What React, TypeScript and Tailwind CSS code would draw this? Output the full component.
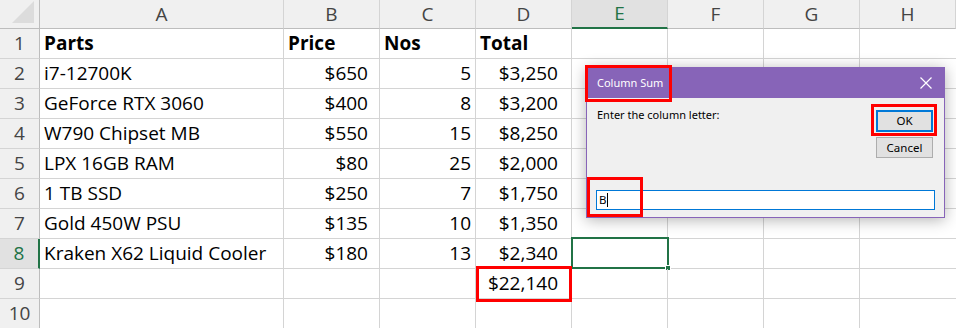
import React from "react";

const cols = ["A", "B", "C", "D", "E", "F", "G", "H"];

type Row = { a: string; b: string; c: string; d: string; bold?: boolean };
const rows: Row[] = [
  { a: "Parts", b: "Price", c: "Nos", d: "Total", bold: true },
  { a: "i7-12700K", b: "$650", c: "5", d: "$3,250" },
  { a: "GeForce RTX 3060", b: "$400", c: "8", d: "$3,200" },
  { a: "W790 Chipset MB", b: "$550", c: "15", d: "$8,250" },
  { a: "LPX 16GB RAM", b: "$80", c: "25", d: "$2,000" },
  { a: "1 TB SSD", b: "$250", c: "7", d: "$1,750" },
  { a: "Gold 450W PSU", b: "$135", c: "10", d: "$1,350" },
  { a: "Kraken X62 Liquid Cooler", b: "$180", c: "13", d: "$2,340" },
  { a: "", b: "", c: "", d: "$22,140" },
  { a: "", b: "", c: "", d: "" },
];

const cellFont = { fontFamily: "'Open Sans', 'Liberation Sans', sans-serif" };
const uiFont = { fontFamily: "'Noto Sans', 'Liberation Sans', sans-serif" };

export default function App() {
  return (
    <div className="relative w-[956px] h-[328px] overflow-hidden bg-white" style={cellFont}>
      <div className="grid grid-cols-[40px_244px_96px_96px_96px_96px_96px_96px_96px] text-[19px] text-black">
        {/* header row */}
        <div className="h-[29px] bg-[#f0f0f0] border-r border-b border-[#bdbdbd] relative">
          <div className="absolute right-[5px] bottom-[5px] w-0 h-0 border-l-[22px] border-l-transparent border-b-[22px] border-b-[#dcdcdc]" />
        </div>
        {cols.map((c) => {
          const sel = c === "E";
          return (
            <div
              key={c}
              className={
                sel
                  ? "h-[29px] bg-[#e1e1e1] border-r border-[#d4d4d4] border-b-2 border-b-[#217346] flex items-center justify-center text-[#217346]"
                  : "h-[29px] bg-[#f0f0f0] border-r border-b border-[#d4d4d4] border-b-[#bdbdbd] flex items-center justify-center text-[#444]"
              }
            >
              {c}
            </div>
          );
        })}
        {rows.map((r, i) => {
          const n = i + 1;
          const selRow = n === 8;
          const fw = r.bold ? "font-bold" : "";
          return (
            <React.Fragment key={n}>
              <div
                className={
                  selRow
                    ? "h-[30px] bg-[#e1e1e1] border-b border-[#d4d4d4] border-r-2 border-r-[#217346] flex items-center justify-center text-[#217346]"
                    : "h-[30px] bg-[#f0f0f0] border-b border-[#d4d4d4] border-r border-r-[#bdbdbd] flex items-center justify-center text-[#444]"
                }
              >
                {n}
              </div>
              <div className={`h-[30px] border-r border-b border-[#d4d4d4] flex items-center pl-[4px] whitespace-nowrap ${fw}`}>
                {r.a}
              </div>
              <div
                className={`h-[30px] border-r border-b border-[#d4d4d4] flex items-center whitespace-nowrap ${fw} ${
                  r.bold ? "pl-[4px]" : "justify-end pr-[11px]"
                }`}
              >
                {r.b}
              </div>
              <div
                className={`h-[30px] border-r border-b border-[#d4d4d4] flex items-center whitespace-nowrap ${fw} ${
                  r.bold ? "pl-[4px]" : "justify-end pr-[4px]"
                }`}
              >
                {r.c}
              </div>
              <div
                className={`h-[30px] border-r border-b border-[#d4d4d4] flex items-center whitespace-nowrap ${fw} ${
                  r.bold ? "pl-[4px]" : "justify-end pr-[13px]"
                }`}
              >
                {r.d}
              </div>
              <div className="h-[30px] border-r border-b border-[#d4d4d4] relative">
                {selRow && (
                  <>
                    <div className="absolute left-[-1px] top-[-2px] right-[-2px] bottom-[-1px] border-2 border-[#217346]" />
                    <div className="absolute right-[-4px] bottom-[-3px] w-[6px] h-[6px] bg-[#217346] border border-white" />
                  </>
                )}
              </div>
              <div className="h-[30px] border-r border-b border-[#d4d4d4]" />
              <div className="h-[30px] border-r border-b border-[#d4d4d4]" />
              <div className="h-[30px] border-b border-[#d4d4d4]" />
            </React.Fragment>
          );
        })}
      </div>

      {/* red box around total */}
      <div className="absolute left-[476px] top-[266px] w-[96px] h-[36px] border-[3px] border-[#ff0000]" />

      {/* dialog */}
      <div
        className="absolute left-[586px] top-[67px] w-[359px] h-[151px] bg-[#f0f0f0] border border-[#8764b8] shadow-[0_2px_14px_rgba(0,0,0,0.3)] flex flex-col"
        style={uiFont}
      >
        <div className="h-[30px] bg-[#8764b8] flex items-center justify-between pl-[10px] pr-[10px] text-white text-[11px]">
          <span>Column Sum</span>
          <svg width="14" height="14" viewBox="0 0 14 14" className="mr-[1px]">
            <path d="M1.5 1.5 L12.5 12.5 M12.5 1.5 L1.5 12.5" stroke="white" strokeWidth="1.2" fill="none" />
          </svg>
        </div>
        <div className="flex-1 relative text-[11px] text-black">
          <div className="flex justify-between pl-[10px] pr-[11px] pt-[8px]">
            <span className="mt-[1px]">Enter the column letter:</span>
            <div className="flex flex-col gap-[5px] mt-[4px]">
              <div className="w-[57px] h-[22px] bg-[#e1e1e1] border-2 border-[#0078d7] flex items-center justify-center text-[11.5px]">
                OK
              </div>
              <div className="w-[57px] h-[21px] bg-[#e1e1e1] border border-[#adadad] flex items-center justify-center text-[11.5px]">
                Cancel
              </div>
            </div>
          </div>
          <div className="mx-[9px] mt-[32px] h-[20px] bg-white border border-[#0078d7] flex items-center pl-[2px] text-[11.5px]">
            <span>B</span>
            <span className="inline-block w-px h-[14px] bg-black ml-[1px]" />
          </div>
        </div>
      </div>

      {/* red highlight boxes on dialog */}
      <div className="absolute left-[585px] top-[65px] w-[87px] h-[37px] border-[3px] border-[#ff0000]" />
      <div className="absolute left-[871px] top-[104px] w-[66px] h-[32px] border-[3px] border-[#ff0000]" />
      <div className="absolute left-[587px] top-[177px] w-[56px] h-[40px] border-[3px] border-[#ff0000]" />
    </div>
  );
}
